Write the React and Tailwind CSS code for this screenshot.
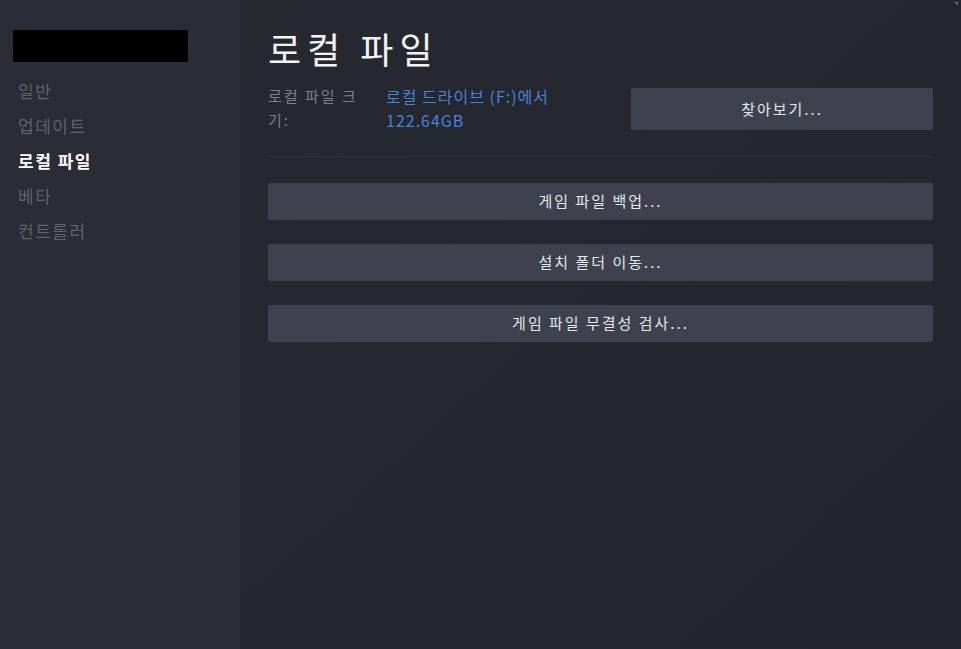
export default function App() {
  const font = { fontFamily: '"Noto Sans CJK KR", "Noto Sans", sans-serif' };
  const nav = [
    { t: "일반", a: false },
    { t: "업데이트", a: false },
    { t: "로컬 파일", a: true },
    { t: "베타", a: false },
    { t: "컨트롤러", a: false },
  ];
  return (
    <div className="flex h-[649px] w-[961px] overflow-hidden bg-[#24272f]" style={font}>
      <aside className="flex w-[240px] shrink-0 flex-col bg-gradient-to-b from-[#2a2d35] to-[#2a2d36] pl-[13px] pt-[30px]">
        <div className="h-[32px] w-[175px] bg-black" />
        <nav className="mt-[15px] flex flex-col pl-[5px]">
          {nav.map((n) => (
            <div
              key={n.t}
              className={`h-[35px] text-[17px] leading-[28px] tracking-[1.5px] ${n.a ? "font-bold text-white" : "text-[#5f636c]"}`}
            >
              {n.t}
            </div>
          ))}
        </nav>
      </aside>
      <main className="relative flex flex-1 flex-col bg-gradient-to-br from-[#262930] via-[#24272f] to-[#23262e] pl-[28px] pr-[28px]">
        <div className="absolute right-[3px] top-[2px] h-[5px] w-[5px] bg-gradient-to-tr from-transparent via-transparent to-[#9a9ea6]" />
        <h1 className="mt-[24px] h-[50px] text-[36px] font-normal leading-[48px] tracking-[6px] text-[#f2f3f5]">로컬 파일</h1>
        <div className="mt-[10px] flex items-start">
          <div className="w-[104px] shrink-0 break-all text-[15px] leading-[24px] tracking-[2px] text-[#7c8089]">로컬 파일 크기:</div>
          <div className="ml-[14px] w-[200px] text-[16px] leading-[24px] tracking-[1px] text-[#4683d9]">
            <div>로컬 드라이브 (F:)에서</div>
            <div>122.64GB</div>
          </div>
          <button className="ml-auto mt-[4px] h-[42px] w-[302px] rounded-[2px] bg-[#3d424e] text-[15px] tracking-[2px] text-[#e4e6ea]">
            찾아보기...
          </button>
        </div>
        <div className="mt-[24px] h-px bg-[#30333b]" />
        <div className="mt-[26px] flex flex-col gap-[24px]">
          {["게임 파일 백업...", "설치 폴더 이동...", "게임 파일 무결성 검사..."].map((b) => (
            <button key={b} className="h-[37px] w-full rounded-[2px] bg-[#3d424e] text-[15px] tracking-[2px] text-[#e4e6ea]">
              {b}
            </button>
          ))}
        </div>
      </main>
    </div>
  );
}
